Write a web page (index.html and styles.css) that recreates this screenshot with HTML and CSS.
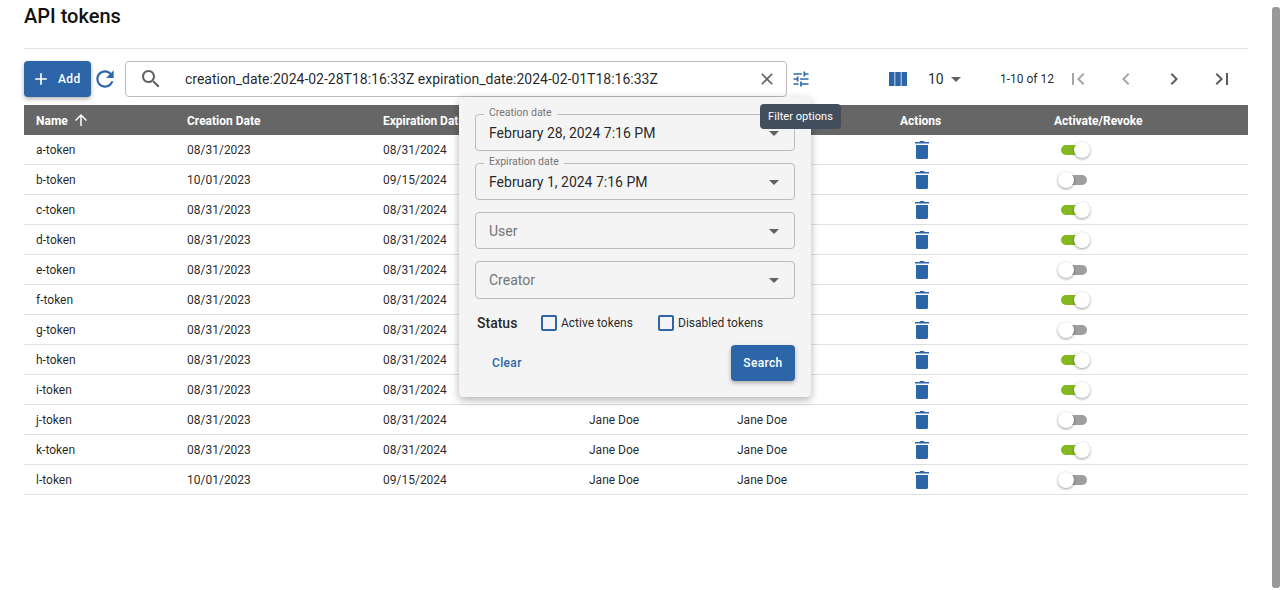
FILE: index.html
```html
<!DOCTYPE html>
<html lang="en">
<head>
    <meta charset="UTF-8">
    <meta name="viewport" content="width=device-width, initial-scale=1.0">
    <title>API tokens</title>
    <link rel="stylesheet" href="styles.css">
</head>
<body>
    <svg class="icon-defs" aria-hidden="true">
        <symbol id="i-add" viewBox="0 0 24 24"><path d="M19 13h-6v6h-2v-6H5v-2h6V5h2v6h6v2z"/></symbol>
        <symbol id="i-refresh" viewBox="0 0 24 24"><path d="M17.65 6.35C16.2 4.9 14.21 4 12 4c-4.42 0-7.99 3.58-7.99 8s3.57 8 7.99 8c3.73 0 6.84-2.55 7.73-6h-2.08c-.82 2.33-3.04 4-5.65 4-3.31 0-6-2.69-6-6s2.69-6 6-6c1.66 0 3.14.69 4.22 1.78L13 11h7V4l-2.35 2.35z"/></symbol>
        <symbol id="i-search" viewBox="0 0 24 24"><path d="M15.5 14h-.79l-.28-.27C15.41 12.59 16 11.11 16 9.5 16 5.91 13.09 3 9.5 3S3 5.91 3 9.5 5.91 16 9.5 16c1.61 0 3.09-.59 4.23-1.57l.27.28v.79l5 4.99L20.49 19l-4.99-5zm-6 0C7.01 14 5 11.99 5 9.5S7.01 5 9.5 5 14 7.01 14 9.5 11.99 14 9.5 14z"/></symbol>
        <symbol id="i-clear" viewBox="0 0 24 24"><path d="M19 6.41 17.59 5 12 10.59 6.41 5 5 6.41 10.59 12 5 17.59 6.41 19 12 13.41 17.59 19 19 17.59 13.41 12z"/></symbol>
        <symbol id="i-tune" viewBox="0 0 24 24"><path d="M3 17v2h6v-2H3zM3 5v2h10V5H3zm10 16v-2h8v-2h-8v-2h-2v6h2zM7 9v2H3v2h4v2h2V9H7zm14 4v-2H11v2h10zm-6-4h2V7h4V5h-4V3h-2v6z"/></symbol>
        <symbol id="i-columns" viewBox="0 0 18 14"><path d="M0 0h5.5v14H0zM6.250 0h5.500v14h-5.500zM12.500 0H18v14h-5.500z"/></symbol>
        <symbol id="i-caret" viewBox="0 0 24 24"><path d="M7 10l5 5 5-5z"/></symbol>
        <symbol id="i-first" viewBox="0 0 24 24"><path d="M18.41 16.59L13.82 12l4.59-4.59L17 6l-6 6 6 6zM6 6h2v12H6z"/></symbol>
        <symbol id="i-prev" viewBox="0 0 24 24"><path d="M15.41 7.41L14 6l-6 6 6 6 1.41-1.41L10.830 12z"/></symbol>
        <symbol id="i-next" viewBox="0 0 24 24"><path d="M10 6L8.590 7.410 13.170 12l-4.580 4.590L10 18l6-6z"/></symbol>
        <symbol id="i-last" viewBox="0 0 24 24"><path d="M5.590 7.410L10.180 12l-4.590 4.590L7 18l6-6-6-6zM16 6h2v12h-2z"/></symbol>
        <symbol id="i-up" viewBox="0 0 24 24"><path d="M4 12l1.41 1.41L11 7.83V20h2V7.83l5.58 5.59L20 12l-8-8-8 8z"/></symbol>
        <symbol id="i-trash" viewBox="0 0 16 19"><path d="M1 2h4.500l.5-1h4l.5 1H15v1.500H1zM2 5h12v12.500c0 .8-.7 1.500-1.500 1.500h-9C2.700 19 2 18.300 2 17.500z"/></symbol>
    </svg>

    <main class="page">
        <h1 class="title">API tokens</h1>

        <div class="content">
            <div class="toolbar">
                <button class="btn btn-add"><svg class="icon-add"><use href="#i-add"/></svg>Add</button>
                <svg class="icon-refresh"><use href="#i-refresh"/></svg>
                <div class="search-box">
                    <svg class="icon-search"><use href="#i-search"/></svg>
                    <span class="search-text">creation_date:2024-02-28T18:16:33Z expiration_date:2024-02-01T18:16:33Z</span>
                    <svg class="icon-clear"><use href="#i-clear"/></svg>
                </div>
                <svg class="icon-tune"><use href="#i-tune"/></svg>
                <svg class="icon-columns"><use href="#i-columns"/></svg>
                <span class="page-size">10</span>
                <svg class="icon-caret"><use href="#i-caret"/></svg>
                <span class="page-range">1-10 of 12</span>
                <svg class="icon-page muted"><use href="#i-first"/></svg>
                <svg class="icon-page muted"><use href="#i-prev"/></svg>
                <svg class="icon-page"><use href="#i-next"/></svg>
                <svg class="icon-page"><use href="#i-last"/></svg>
            </div>

            <table class="tokens">
                <colgroup>
                    <col class="col-name">
                    <col class="col-created">
                    <col class="col-expires">
                    <col class="col-user">
                    <col class="col-creator">
                    <col class="col-actions">
                    <col class="col-toggle">
                </colgroup>
                <thead>
                    <tr>
                        <th><span class="sort-head">Name <svg class="icon-sort"><use href="#i-up"/></svg></span></th>
                        <th>Creation Date</th>
                        <th>Expiration Date</th>
                        <th>User</th>
                        <th>Creator</th>
                        <th>Actions</th>
                        <th>Activate/Revoke</th>
                    </tr>
                </thead>
                <tbody>
                    <tr><td>a-token</td><td>08/31/2023</td><td>08/31/2024</td><td>Jane Doe</td><td>Jane Doe</td><td><svg class="icon-trash"><use href="#i-trash"/></svg></td><td><span class="switch on"><span class="knob"></span></span></td></tr>
                    <tr><td>b-token</td><td>10/01/2023</td><td>09/15/2024</td><td>Jane Doe</td><td>Jane Doe</td><td><svg class="icon-trash"><use href="#i-trash"/></svg></td><td><span class="switch"><span class="knob"></span></span></td></tr>
                    <tr><td>c-token</td><td>08/31/2023</td><td>08/31/2024</td><td>Jane Doe</td><td>Jane Doe</td><td><svg class="icon-trash"><use href="#i-trash"/></svg></td><td><span class="switch on"><span class="knob"></span></span></td></tr>
                    <tr><td>d-token</td><td>08/31/2023</td><td>08/31/2024</td><td>Jane Doe</td><td>Jane Doe</td><td><svg class="icon-trash"><use href="#i-trash"/></svg></td><td><span class="switch on"><span class="knob"></span></span></td></tr>
                    <tr><td>e-token</td><td>08/31/2023</td><td>08/31/2024</td><td>Jane Doe</td><td>Jane Doe</td><td><svg class="icon-trash"><use href="#i-trash"/></svg></td><td><span class="switch"><span class="knob"></span></span></td></tr>
                    <tr><td>f-token</td><td>08/31/2023</td><td>08/31/2024</td><td>Jane Doe</td><td>Jane Doe</td><td><svg class="icon-trash"><use href="#i-trash"/></svg></td><td><span class="switch on"><span class="knob"></span></span></td></tr>
                    <tr><td>g-token</td><td>08/31/2023</td><td>08/31/2024</td><td>Jane Doe</td><td>Jane Doe</td><td><svg class="icon-trash"><use href="#i-trash"/></svg></td><td><span class="switch"><span class="knob"></span></span></td></tr>
                    <tr><td>h-token</td><td>08/31/2023</td><td>08/31/2024</td><td>Jane Doe</td><td>Jane Doe</td><td><svg class="icon-trash"><use href="#i-trash"/></svg></td><td><span class="switch on"><span class="knob"></span></span></td></tr>
                    <tr><td>i-token</td><td>08/31/2023</td><td>08/31/2024</td><td>Jane Doe</td><td>Jane Doe</td><td><svg class="icon-trash"><use href="#i-trash"/></svg></td><td><span class="switch on"><span class="knob"></span></span></td></tr>
                    <tr><td>j-token</td><td>08/31/2023</td><td>08/31/2024</td><td>Jane Doe</td><td>Jane Doe</td><td><svg class="icon-trash"><use href="#i-trash"/></svg></td><td><span class="switch"><span class="knob"></span></span></td></tr>
                    <tr><td>k-token</td><td>08/31/2023</td><td>08/31/2024</td><td>Jane Doe</td><td>Jane Doe</td><td><svg class="icon-trash"><use href="#i-trash"/></svg></td><td><span class="switch on"><span class="knob"></span></span></td></tr>
                    <tr><td>l-token</td><td>10/01/2023</td><td>09/15/2024</td><td>Jane Doe</td><td>Jane Doe</td><td><svg class="icon-trash"><use href="#i-trash"/></svg></td><td><span class="switch"><span class="knob"></span></span></td></tr>
                </tbody>
            </table>

            <form class="filter-popup">
                <div class="field">
                    <span class="field-label">Creation date</span>
                    <span class="field-value">February 28, 2024 7:16 PM</span>
                    <svg class="icon-field-caret"><use href="#i-caret"/></svg>
                </div>
                <div class="field">
                    <span class="field-label">Expiration date</span>
                    <span class="field-value">February 1, 2024 7:16 PM</span>
                    <svg class="icon-field-caret"><use href="#i-caret"/></svg>
                </div>
                <div class="field">
                    <span class="field-value placeholder">User</span>
                    <svg class="icon-field-caret"><use href="#i-caret"/></svg>
                </div>
                <div class="field field-tall">
                    <span class="field-value placeholder">Creator</span>
                    <svg class="icon-field-caret"><use href="#i-caret"/></svg>
                </div>
                <div class="status-row">
                    <span class="status-title">Status</span>
                    <label class="check check-active"><input type="checkbox">Active tokens</label>
                    <label class="check"><input type="checkbox">Disabled tokens</label>
                </div>
                <div class="popup-actions">
                    <span class="btn-clear">Clear</span>
                    <button type="button" class="btn btn-search">Search</button>
                </div>
            </form>

            <div class="tooltip">Filter options</div>
        </div>
    </main>

    <div class="scrollbar"><div class="scrollbar-thumb"></div></div>
</body>
</html>
```

FILE: styles.css
```css
html, body {
    height: 100%;
}
body {
    margin: 0;
    display: flex;
    overflow: hidden;
    background-color: white;
    color: rgba(0, 0, 0, 0.87);
    font-family: Roboto, "Liberation Sans", sans-serif;
}
.icon-defs {
    display: none;
}
svg {
    flex: none;
    fill: currentColor;
}
.page {
    flex: 1;
    min-width: 0;
    padding: 0 24px;
}
.title {
    margin: 0;
    height: 48px;
    line-height: 32px;
    font-size: 20px;
    font-weight: 500;
    color: #111;
    border-bottom: 1px solid #e0e0e0;
}
.content {
    position: relative;
}

/* toolbar */
.toolbar {
    display: flex;
    align-items: center;
    height: 36px;
    padding-top: 12px;
    margin-bottom: 8px;
}
.btn {
    border: none;
    border-radius: 4px;
    background-color: #2c65a8;
    color: white;
    font-family: inherit;
    font-size: 12px;
    font-weight: 500;
    letter-spacing: 0.34px;
    box-shadow: 0px 2px 4px rgba(0, 0, 0, 0.3);
    cursor: pointer;
}
.btn-add {
    display: flex;
    align-items: center;
    width: 67px;
    height: 36px;
    padding: 0 0 0 7px;
}
.icon-add {
    width: 20px;
    height: 20px;
    margin-right: 7px;
}
.icon-refresh {
    width: 26px;
    height: 26px;
    margin: 0 7px 0 1px;
    color: #2c65a8;
}
.search-box {
    display: flex;
    align-items: center;
    box-sizing: border-box;
    width: 662px;
    height: 36px;
    padding: 0 9px 0 13px;
    border: 1px solid #bbb;
    border-radius: 4px;
}
.icon-search {
    width: 24px;
    height: 24px;
    margin-right: 22px;
    color: #616161;
}
.search-text {
    flex: 1;
    font-size: 14px;
    white-space: nowrap;
}
.icon-clear {
    width: 20px;
    height: 20px;
    color: #616161;
}
.icon-tune {
    width: 20px;
    height: 20px;
    margin-left: 4px;
    margin-right: 78px;
    color: #2c65a8;
}
.icon-columns {
    width: 18px;
    height: 14px;
    margin-right: 21px;
    color: #2c65a8;
}
.page-size {
    width: 18px;
    font-size: 14px;
}
.icon-caret {
    width: 24px;
    height: 24px;
    margin-right: 32px;
    margin-left: -2px;
    color: #616161;
}
.page-range {
    width: 54px;
    font-size: 12px;
    white-space: nowrap;
}
.icon-page {
    width: 48px;
    height: 24px;
    color: #5c5c5c;
}
.icon-page.muted {
    color: #a6a6a6;
}

/* table */
.tokens {
    width: 100%;
    table-layout: fixed;
    border-collapse: separate;
    border-spacing: 0;
    font-size: 12px;
}
.col-name { width: 151px; }
.col-created { width: 196px; }
.col-expires { width: 206px; }
.col-user { width: 148px; }
.col-creator { width: 163px; }
.col-actions { width: 154px; }
.tokens th {
    box-sizing: border-box;
    height: 30px;
    padding: 2px 12px 0;
    background-color: #666;
    color: white;
    font-weight: 700;
    text-align: left;
}
.tokens td {
    box-sizing: border-box;
    height: 30px;
    padding: 0 12px;
    border-bottom: 1px solid #e0e0e0;
}
.sort-head {
    display: flex;
    align-items: center;
    gap: 2px;
}
.icon-sort {
    width: 18px;
    height: 18px;
    margin-left: 2px;
    margin-top: -2px;
}
.icon-trash {
    display: block;
    width: 16px;
    height: 19px;
    margin-left: 14px;
    color: #2c65a8;
}
.switch {
    display: flex;
    align-items: center;
    width: 26px;
    height: 10px;
    margin-left: 7px;
    border-radius: 5px;
    background-color: #9e9e9e;
}
.switch.on {
    justify-content: flex-end;
    background-color: #85b81f;
}
.knob {
    flex: none;
    width: 16px;
    height: 16px;
    margin: 0 -3px;
    border-radius: 50%;
    background-color: white;
    box-shadow: 0px 1px 3px rgba(0, 0, 0, 0.4);
}

/* filter popup, sits over the table */
.filter-popup {
    position: absolute;
    top: 48px;
    left: 435px;
    z-index: 2;
    box-sizing: border-box;
    width: 352px;
    height: 300px;
    padding: 17px 16px 16px;
    background-color: #f4f4f4;
    border-radius: 4px;
    box-shadow: 0px 3px 8px rgba(0, 0, 0, 0.3);
}
.field {
    position: relative;
    display: flex;
    align-items: center;
    justify-content: space-between;
    box-sizing: border-box;
    height: 37px;
    margin-bottom: 12px;
    padding: 0 11px 0 13px;
    border: 1px solid #bbb;
    border-radius: 4px;
}
.field-tall {
    height: 38px;
    margin-bottom: 0;
}
.field-label {
    position: absolute;
    top: -8px;
    left: 8px;
    padding: 0 5px;
    background-color: #f4f4f4;
    color: #757575;
    font-size: 10.5px;
    line-height: 12px;
}
.field-value {
    font-size: 14px;
}
.placeholder {
    color: #757575;
}
.icon-field-caret {
    width: 24px;
    height: 24px;
    margin-right: -3px;
    color: #616161;
}
.status-row {
    display: flex;
    align-items: center;
    height: 24px;
    margin-top: 12px;
    padding-left: 2px;
}
.status-title {
    width: 64px;
    font-size: 14px;
    font-weight: 500;
}
.check {
    display: flex;
    align-items: center;
    font-size: 12px;
}
.check-active {
    width: 117px;
}
.check input {
    appearance: none;
    box-sizing: border-box;
    width: 16px;
    height: 16px;
    margin: 0 4px 0 0;
    border: 2px solid #2c65a8;
    border-radius: 2px;
    background-color: transparent;
}
.popup-actions {
    display: flex;
    align-items: center;
    justify-content: space-between;
    margin-top: 10px;
}
.btn-clear {
    padding-left: 17px;
    color: #2c65a8;
    font-size: 12px;
    font-weight: 500;
    letter-spacing: 0.34px;
}
.btn-search {
    width: 64px;
    height: 36px;
    padding: 0;
}

/* tooltip, sits over the popup */
.tooltip {
    position: absolute;
    top: 55px;
    left: 736px;
    z-index: 3;
    box-sizing: border-box;
    width: 81px;
    height: 25px;
    background-color: #434e5c;
    border-radius: 4px;
    color: white;
    font-size: 11px;
    line-height: 26px;
    letter-spacing: 0.05px;
    text-align: center;
}

/* scrollbar */
.scrollbar {
    flex: none;
    width: 8px;
    padding: 7px 0 2px;
    box-sizing: border-box;
}
.scrollbar-thumb {
    height: 100%;
    border-radius: 3px;
    background-color: #999;
}
```
